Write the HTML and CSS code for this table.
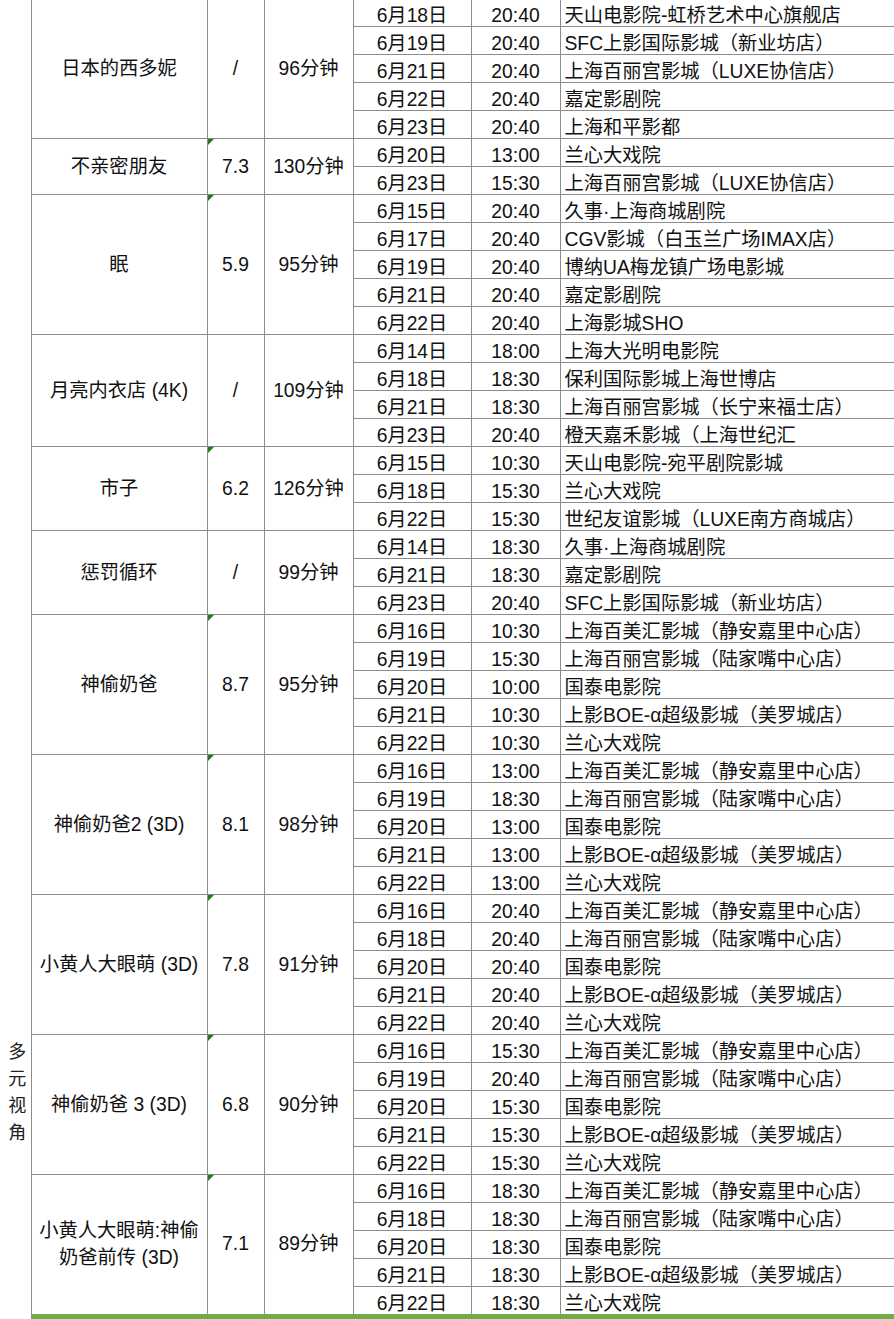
FILE: index.html
```html
<!DOCTYPE html>
<html lang="zh-CN">
<head>
<meta charset="utf-8">
<title>多元视角 排片表</title>
<link rel="stylesheet" href="styles.css">
</head>
<body>
<table class="sheet">
  <colgroup>
    <col class="c-cat"><col class="c-film"><col class="c-rate"><col class="c-dur"><col class="c-date"><col class="c-time"><col class="c-cin">
  </colgroup>
  <tbody>
    <tr>
      <td class="cat" rowspan="48"><span class="vert">多元视角</span></td>
      <td class="film" rowspan="5">日本的西多妮</td><td class="rate" rowspan="5">/</td><td class="dur" rowspan="5">96分钟</td>
      <td class="d">6月18日</td><td class="t">20:40</td><td class="cin">天山电影院-虹桥艺术中心旗舰店</td>
    </tr>
    <tr><td class="d">6月19日</td><td class="t">20:40</td><td class="cin">SFC上影国际影城（新业坊店）</td></tr>
    <tr><td class="d">6月21日</td><td class="t">20:40</td><td class="cin">上海百丽宫影城（LUXE协信店）</td></tr>
    <tr><td class="d">6月22日</td><td class="t">20:40</td><td class="cin">嘉定影剧院</td></tr>
    <tr><td class="d">6月23日</td><td class="t">20:40</td><td class="cin">上海和平影都</td></tr>

    <tr>
      <td class="film" rowspan="2">不亲密朋友</td><td class="rate flag" rowspan="2">7.3</td><td class="dur" rowspan="2">130分钟</td>
      <td class="d">6月20日</td><td class="t">13:00</td><td class="cin">兰心大戏院</td>
    </tr>
    <tr><td class="d">6月23日</td><td class="t">15:30</td><td class="cin">上海百丽宫影城（LUXE协信店）</td></tr>

    <tr>
      <td class="film" rowspan="5">眠</td><td class="rate flag" rowspan="5">5.9</td><td class="dur" rowspan="5">95分钟</td>
      <td class="d">6月15日</td><td class="t">20:40</td><td class="cin">久事·上海商城剧院</td>
    </tr>
    <tr><td class="d">6月17日</td><td class="t">20:40</td><td class="cin">CGV影城（白玉兰广场IMAX店）</td></tr>
    <tr><td class="d">6月19日</td><td class="t">20:40</td><td class="cin">博纳UA梅龙镇广场电影城</td></tr>
    <tr><td class="d">6月21日</td><td class="t">20:40</td><td class="cin">嘉定影剧院</td></tr>
    <tr><td class="d">6月22日</td><td class="t">20:40</td><td class="cin">上海影城SHO</td></tr>

    <tr>
      <td class="film" rowspan="4">月亮内衣店 (4K)</td><td class="rate" rowspan="4">/</td><td class="dur" rowspan="4">109分钟</td>
      <td class="d">6月14日</td><td class="t">18:00</td><td class="cin">上海大光明电影院</td>
    </tr>
    <tr><td class="d">6月18日</td><td class="t">18:30</td><td class="cin">保利国际影城上海世博店</td></tr>
    <tr><td class="d">6月21日</td><td class="t">18:30</td><td class="cin">上海百丽宫影城（长宁来福士店）</td></tr>
    <tr><td class="d">6月23日</td><td class="t">20:40</td><td class="cin">橙天嘉禾影城（上海世纪汇</td></tr>

    <tr>
      <td class="film" rowspan="3">市子</td><td class="rate flag" rowspan="3">6.2</td><td class="dur" rowspan="3">126分钟</td>
      <td class="d">6月15日</td><td class="t">10:30</td><td class="cin">天山电影院-宛平剧院影城</td>
    </tr>
    <tr><td class="d">6月18日</td><td class="t">15:30</td><td class="cin">兰心大戏院</td></tr>
    <tr><td class="d">6月22日</td><td class="t">15:30</td><td class="cin">世纪友谊影城（LUXE南方商城店）</td></tr>

    <tr>
      <td class="film" rowspan="3">惩罚循环</td><td class="rate" rowspan="3">/</td><td class="dur" rowspan="3">99分钟</td>
      <td class="d">6月14日</td><td class="t">18:30</td><td class="cin">久事·上海商城剧院</td>
    </tr>
    <tr><td class="d">6月21日</td><td class="t">18:30</td><td class="cin">嘉定影剧院</td></tr>
    <tr><td class="d">6月23日</td><td class="t">20:40</td><td class="cin">SFC上影国际影城（新业坊店）</td></tr>

    <tr>
      <td class="film" rowspan="5">神偷奶爸</td><td class="rate flag" rowspan="5">8.7</td><td class="dur" rowspan="5">95分钟</td>
      <td class="d">6月16日</td><td class="t">10:30</td><td class="cin">上海百美汇影城（静安嘉里中心店）</td>
    </tr>
    <tr><td class="d">6月19日</td><td class="t">15:30</td><td class="cin">上海百丽宫影城（陆家嘴中心店）</td></tr>
    <tr><td class="d">6月20日</td><td class="t">10:00</td><td class="cin">国泰电影院</td></tr>
    <tr><td class="d">6月21日</td><td class="t">10:30</td><td class="cin">上影BOE-α超级影城（美罗城店）</td></tr>
    <tr><td class="d">6月22日</td><td class="t">10:30</td><td class="cin">兰心大戏院</td></tr>

    <tr>
      <td class="film" rowspan="5">神偷奶爸2 (3D)</td><td class="rate flag" rowspan="5">8.1</td><td class="dur" rowspan="5">98分钟</td>
      <td class="d">6月16日</td><td class="t">13:00</td><td class="cin">上海百美汇影城（静安嘉里中心店）</td>
    </tr>
    <tr><td class="d">6月19日</td><td class="t">18:30</td><td class="cin">上海百丽宫影城（陆家嘴中心店）</td></tr>
    <tr><td class="d">6月20日</td><td class="t">13:00</td><td class="cin">国泰电影院</td></tr>
    <tr><td class="d">6月21日</td><td class="t">13:00</td><td class="cin">上影BOE-α超级影城（美罗城店）</td></tr>
    <tr><td class="d">6月22日</td><td class="t">13:00</td><td class="cin">兰心大戏院</td></tr>

    <tr>
      <td class="film" rowspan="5">小黄人大眼萌 (3D)</td><td class="rate flag" rowspan="5">7.8</td><td class="dur" rowspan="5">91分钟</td>
      <td class="d">6月16日</td><td class="t">20:40</td><td class="cin">上海百美汇影城（静安嘉里中心店）</td>
    </tr>
    <tr><td class="d">6月18日</td><td class="t">20:40</td><td class="cin">上海百丽宫影城（陆家嘴中心店）</td></tr>
    <tr><td class="d">6月20日</td><td class="t">20:40</td><td class="cin">国泰电影院</td></tr>
    <tr><td class="d">6月21日</td><td class="t">20:40</td><td class="cin">上影BOE-α超级影城（美罗城店）</td></tr>
    <tr><td class="d">6月22日</td><td class="t">20:40</td><td class="cin">兰心大戏院</td></tr>

    <tr>
      <td class="film" rowspan="5">神偷奶爸 3 (3D)</td><td class="rate flag" rowspan="5">6.8</td><td class="dur" rowspan="5">90分钟</td>
      <td class="d">6月16日</td><td class="t">15:30</td><td class="cin">上海百美汇影城（静安嘉里中心店）</td>
    </tr>
    <tr><td class="d">6月19日</td><td class="t">20:40</td><td class="cin">上海百丽宫影城（陆家嘴中心店）</td></tr>
    <tr><td class="d">6月20日</td><td class="t">15:30</td><td class="cin">国泰电影院</td></tr>
    <tr><td class="d">6月21日</td><td class="t">15:30</td><td class="cin">上影BOE-α超级影城（美罗城店）</td></tr>
    <tr><td class="d">6月22日</td><td class="t">15:30</td><td class="cin">兰心大戏院</td></tr>

    <tr>
      <td class="film" rowspan="5">小黄人大眼萌:神偷<br>奶爸前传 (3D)</td><td class="rate flag" rowspan="5">7.1</td><td class="dur" rowspan="5">89分钟</td>
      <td class="d">6月16日</td><td class="t">18:30</td><td class="cin">上海百美汇影城（静安嘉里中心店）</td>
    </tr>
    <tr><td class="d">6月18日</td><td class="t">18:30</td><td class="cin">上海百丽宫影城（陆家嘴中心店）</td></tr>
    <tr><td class="d">6月20日</td><td class="t">18:30</td><td class="cin">国泰电影院</td></tr>
    <tr><td class="d">6月21日</td><td class="t">18:30</td><td class="cin">上影BOE-α超级影城（美罗城店）</td></tr>
    <tr><td class="d">6月22日</td><td class="t">18:30</td><td class="cin">兰心大戏院</td></tr>

    <tr class="end"><td></td><td></td><td></td><td></td><td></td><td></td></tr>
  </tbody>
</table>
</body>
</html>
```

FILE: styles.css
```css
html, body {
  margin: 0;
  padding: 0;
  overflow: hidden;
  background: #ffffff;
}

.sheet {
  border-collapse: collapse;
  table-layout: fixed;
  width: 895px;
  margin-top: -2px;
  font-family: "Liberation Sans", "Noto Sans CJK SC", sans-serif;
  font-size: 19.3px;
  color: #111111;
}

.c-cat { width: 31px; }
.c-film { width: 176px; }
.c-rate { width: 57px; }
.c-dur { width: 89px; }
.c-date { width: 118px; }
.c-time { width: 89px; }
.c-cin { width: 335px; }

.sheet tr { height: 28px; }

.sheet td {
  border: 1px solid #8c8c8c;
  padding: 0;
  line-height: 20px;
  white-space: nowrap;
  overflow: hidden;
}

.sheet td.cat {
  border-left: none;
  border-top: none;
  border-bottom: none;
  vertical-align: top;
  text-align: center;
  padding-top: 1043px;
}

.vert {
  display: inline-block;
  writing-mode: vertical-rl;
  font-size: 18px;
  line-height: 18px;
  letter-spacing: 9px;
  color: #222222;
}

.sheet td.film {
  text-align: center;
  vertical-align: middle;
  line-height: 27px;
  white-space: normal;
}

.sheet td.rate,
.sheet td.dur {
  text-align: center;
  vertical-align: middle;
}

.sheet td.flag { position: relative; }
.sheet td.flag::before {
  content: "";
  position: absolute;
  left: 0;
  top: 0;
  width: 0;
  height: 0;
  border-top: 6px solid #1d7a1d;
  border-right: 6px solid transparent;
}

.sheet td.d,
.sheet td.t {
  text-align: center;
  vertical-align: bottom;
}

.sheet td.cin {
  text-align: left;
  vertical-align: bottom;
  padding-left: 4px;
}

.sheet tr.end { height: 6px; }
.sheet tr.end td {
  background: #6fac46;
  border-top: 2px solid #6fac46;
  border-bottom: none;
  height: 4px;
  line-height: 0;
}
```
